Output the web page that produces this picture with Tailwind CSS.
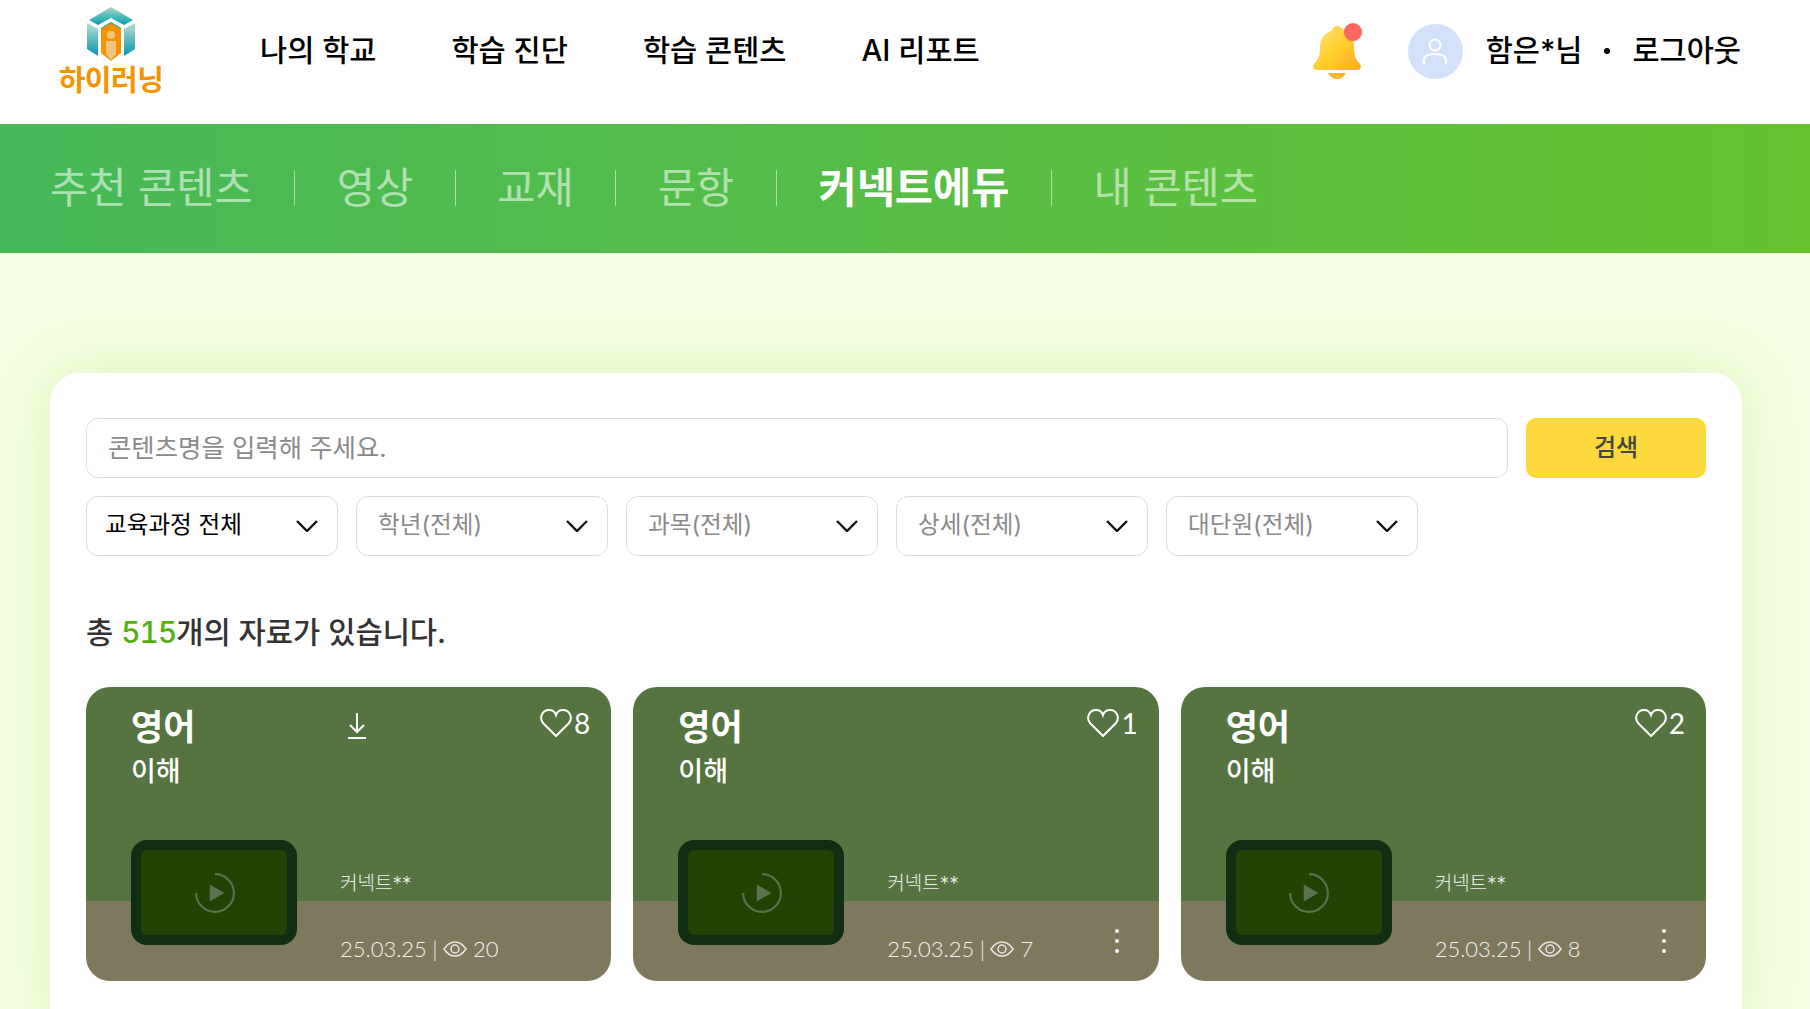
<!DOCTYPE html>
<html lang="ko">
<head>
<meta charset="utf-8">
<script src="https://cdn.jsdelivr.net/npm/@tailwindcss/browser@4"></script>
</head>
<body class="w-[1810px] h-[1009px] overflow-hidden bg-[#f5ffe1] font-['Inter','Noto_Sans_CJK_KR','Noto_Sans',sans-serif]">
<header class="h-[124px] bg-white flex items-center pl-[58px] pr-[69px] text-black">
  <div class="w-[106px] h-[124px] flex flex-col items-center pt-[7px]">
    <svg width="50" height="54" viewBox="0 0 50 54">
      <defs>
        <linearGradient id="top" x1="0" y1="0" x2="0" y2="1"><stop offset="0" stop-color="#a9d8c6"/><stop offset="1" stop-color="#00a0b5"/></linearGradient>
        <linearGradient id="side" x1="0" y1="0" x2="0" y2="1"><stop offset="0" stop-color="#b5e0d0"/><stop offset="1" stop-color="#0a93b0"/></linearGradient>
      </defs>
      <path d="M25 0L47 13L38 18L25 11L12 18L3 13Z" fill="url(#top)"/>
      <path d="M25 15L35 21V28H15V21Z" fill="#00a0b5"/>
      <path d="M1 17L12 23V50L1 43Z" fill="url(#side)" transform="translate(0 -1)"/>
      <path d="M49 17L38 23V50L49 43Z" fill="url(#side)" transform="translate(0 -1)"/>
      <path d="M15 22L25 16L35 22V46L25 54L15 46Z" fill="#f59300"/>
      <path d="M20 34H30V47L25 53L20 47Z" fill="#f2c47d"/>
      <circle cx="25" cy="28" r="4" fill="#f2c47d"/>
    </svg>
    <div class="text-[29px] leading-[32px] font-bold text-[#f59300] mt-[4px] tracking-[-0.5px] whitespace-nowrap">하이러닝</div>
  </div>
  <nav class="flex gap-[75px] ml-[96px] text-[29.5px] font-medium leading-none -mt-[23px]">
    <a>나의 학교</a><a>학습 진단</a><a>학습 콘텐츠</a><a>AI 리포트</a>
  </nav>
  <div class="ml-auto flex items-center -mt-[22px]">
    <div class="relative w-[50px] h-[56px] mr-[45px]">
      <svg width="50" height="56" viewBox="0 0 50 56">
        <defs><linearGradient id="bell" x1="0" y1="0" x2="1" y2="1"><stop offset="0" stop-color="#fde58a"/><stop offset=".5" stop-color="#ffd02a"/><stop offset="1" stop-color="#ffa92a"/></linearGradient></defs>
        <path d="M24 3C28 3 30 6 31 8C38 10 41 16 41 24C41 33 43 37 47 41C49 44 47 47 45 47H3C1 47 -1 44 1 41C5 37 7 33 7 24C7 14 13 10 18 8C19 5 21 3 24 3Z" fill="url(#bell)"/>
        <path d="M15 50H33C31 54 28 56 24 56C20 56 17 54 15 50Z" fill="#ffb62a"/>
      </svg>
      <span class="absolute left-[31px] top-0 w-[18px] h-[18px] rounded-full bg-[#ff6660] shadow"></span>
    </div>
    <div class="w-[55px] h-[55px] rounded-full bg-[#d3e1fb] flex items-center justify-center mr-[23px]">
      <svg width="26" height="28" viewBox="0 0 26 28" fill="none" stroke="#fff" stroke-width="2"><circle cx="13" cy="8" r="5.5"/><path d="M2 26V23C2 19 6 17 13 17S24 19 24 23V26" stroke-linecap="round"/></svg>
    </div>
    <span class="text-[29.5px] font-medium leading-none">함은*님</span>
    <span class="w-[6px] h-[6px] rounded-full bg-black mx-[22px]"></span>
    <a class="text-[29.5px] font-medium leading-none">로그아웃</a>
  </div>
</header>
<div class="h-[129px] bg-gradient-to-r from-[#46b858] to-[#66c22d] flex items-center pl-[50px] text-[41.5px] leading-none text-white/55">
  <a>추천 콘텐츠</a><i class="w-px h-[36px] -mt-[2px] bg-white/50 mx-[41.6px]"></i>
  <a>영상</a><i class="w-px h-[36px] -mt-[2px] bg-white/50 mx-[41.6px]"></i>
  <a>교재</a><i class="w-px h-[36px] -mt-[2px] bg-white/50 mx-[41.6px]"></i>
  <a>문항</a><i class="w-px h-[36px] -mt-[2px] bg-white/50 mx-[41.6px]"></i>
  <a class="text-white font-bold">커넥트에듀</a><i class="w-px h-[36px] -mt-[2px] bg-white/50 mx-[41.6px]"></i>
  <a>내 콘텐츠</a>
</div>
<main class="mt-[120px] mx-[50px] w-[1692px] bg-white rounded-t-[30px] px-[36px] pt-[45px] pb-[40px] shadow-[0_0_60px_rgba(120,190,60,0.2)]">
  <div class="flex gap-[18px]">
    <div class="flex-1 h-[60px] border border-[#dcdcdc] rounded-[12px] flex items-center pl-[21px] text-[25.4px] text-[#8a8a8a]">콘텐츠명을 입력해 주세요.</div>
    <button class="w-[180px] h-[60px] rounded-[10px] bg-[#fbd83c] text-[24px] text-[#444] font-medium">검색</button>
  </div>
  <div class="flex gap-[18px] mt-[18px]">
    <div class="w-[252px] h-[60px] border border-[#dcdcdc] rounded-[12px] flex items-center justify-between pl-[18px] pr-[19px] text-[23.6px] text-black"><span class="-mt-[2px]">교육과정 전체</span><svg width="22" height="12" viewBox="0 0 22 12" fill="none" stroke="#111" stroke-width="2.4"><path d="M1 1L11 11L21 1"/></svg></div>
    <div class="w-[252px] h-[60px] border border-[#dcdcdc] rounded-[12px] flex items-center justify-between pl-[21px] pr-[19px] text-[23.6px] text-[#8a8a8a]"><span class="-mt-[2px]">학년(전체)</span><svg width="22" height="12" viewBox="0 0 22 12" fill="none" stroke="#111" stroke-width="2.4"><path d="M1 1L11 11L21 1"/></svg></div>
    <div class="w-[252px] h-[60px] border border-[#dcdcdc] rounded-[12px] flex items-center justify-between pl-[21px] pr-[19px] text-[23.6px] text-[#8a8a8a]"><span class="-mt-[2px]">과목(전체)</span><svg width="22" height="12" viewBox="0 0 22 12" fill="none" stroke="#111" stroke-width="2.4"><path d="M1 1L11 11L21 1"/></svg></div>
    <div class="w-[252px] h-[60px] border border-[#dcdcdc] rounded-[12px] flex items-center justify-between pl-[21px] pr-[19px] text-[23.6px] text-[#8a8a8a]"><span class="-mt-[2px]">상세(전체)</span><svg width="22" height="12" viewBox="0 0 22 12" fill="none" stroke="#111" stroke-width="2.4"><path d="M1 1L11 11L21 1"/></svg></div>
    <div class="w-[252px] h-[60px] border border-[#dcdcdc] rounded-[12px] flex items-center justify-between pl-[21px] pr-[19px] text-[23.6px] text-[#8a8a8a]"><span class="-mt-[2px]">대단원(전체)</span><svg width="22" height="12" viewBox="0 0 22 12" fill="none" stroke="#111" stroke-width="2.4"><path d="M1 1L11 11L21 1"/></svg></div>
  </div>
  <p class="mt-[56px] text-[29.6px] leading-[40px] font-medium text-[#333]">총 <span class="text-[#52b10e] tabular-nums tracking-[-0.8px]">515</span>개의 자료가 있습니다.</p>
  <div class="grid grid-cols-3 gap-[22px] mt-[35px]">
    <article class="relative h-[294px] rounded-[24px] overflow-hidden bg-[linear-gradient(#56743f_214px,#7e795c_214px)] text-white pl-[45px] pt-[18px]">
      <h3 class="text-[35px] leading-[44px] font-bold">영어</h3>
      <p class="text-[27px] leading-[36px] mt-[5px] font-medium">이해</p>
      <svg class="absolute left-[261px] top-[25px]" width="20" height="28" viewBox="0 0 20 28" fill="none" stroke="#fff" stroke-width="2"><path d="M10 1V19M3 13L10 20L17 13M1 26H19"/></svg>
      <div class="absolute right-[21px] top-[21px] flex items-center text-[28px] leading-none font-['Lato',sans-serif]"><svg width="32" height="30" viewBox="0 0 32 30" fill="none" stroke="#fff" stroke-width="2"><path d="M16 28L3 15C-1 10 2 2 9 2C12 2 15 4 16 7C17 4 20 2 23 2C30 2 33 10 29 15Z"/></svg><span class="ml-[2px]">8</span></div>
      <div class="absolute left-[45px] top-[153px] w-[166px] h-[105px] rounded-[16px] bg-[#102e12] p-[10px]"><div class="w-full h-full rounded-[6px] bg-[#224304] flex items-center justify-center"><svg class="ml-[1px]" width="42" height="42" viewBox="0 0 40 40" fill="none" stroke="#5a7350" stroke-width="2"><path d="M2 20A18 18 0 1 0 20 2"/><path d="M15 12L29 20L15 28Z" fill="#5a7350" stroke="none"/></svg></div></div>
      <div class="absolute left-[254px] top-[183px] text-[19px] leading-[28px] text-white/90 font-light">커넥트**</div>
      <div class="absolute left-[254px] top-[247px] flex items-center text-[22px] leading-[30px] text-white/90 font-['Lato',sans-serif] font-light">25.03.25<span class="mx-[5.5px]">|</span><svg class="mr-[6px]" width="24" height="16" viewBox="0 0 24 16" fill="none" stroke="#e6e6e0" stroke-width="1.5"><path d="M1 8C5 2 9 1 12 1S19 2 23 8C19 14 15 15 12 15S5 14 1 8Z"/><circle cx="12" cy="8" r="4"/></svg>20</div>
    </article>
    <article class="relative h-[294px] rounded-[24px] overflow-hidden bg-[linear-gradient(#56743f_214px,#7e795c_214px)] text-white pl-[45px] pt-[18px]">
      <h3 class="text-[35px] leading-[44px] font-bold">영어</h3>
      <p class="text-[27px] leading-[36px] mt-[5px] font-medium">이해</p>
      <div class="absolute right-[21px] top-[21px] flex items-center text-[28px] leading-none font-['Lato',sans-serif]"><svg width="32" height="30" viewBox="0 0 32 30" fill="none" stroke="#fff" stroke-width="2"><path d="M16 28L3 15C-1 10 2 2 9 2C12 2 15 4 16 7C17 4 20 2 23 2C30 2 33 10 29 15Z"/></svg><span class="ml-[2px]">1</span></div>
      <div class="absolute left-[45px] top-[153px] w-[166px] h-[105px] rounded-[16px] bg-[#102e12] p-[10px]"><div class="w-full h-full rounded-[6px] bg-[#224304] flex items-center justify-center"><svg class="ml-[1px]" width="42" height="42" viewBox="0 0 40 40" fill="none" stroke="#5a7350" stroke-width="2"><path d="M2 20A18 18 0 1 0 20 2"/><path d="M15 12L29 20L15 28Z" fill="#5a7350" stroke="none"/></svg></div></div>
      <div class="absolute left-[254px] top-[183px] text-[19px] leading-[28px] text-white/90 font-light">커넥트**</div>
      <div class="absolute left-[254px] top-[247px] flex items-center text-[22px] leading-[30px] text-white/90 font-['Lato',sans-serif] font-light">25.03.25<span class="mx-[5.5px]">|</span><svg class="mr-[6px]" width="24" height="16" viewBox="0 0 24 16" fill="none" stroke="#e6e6e0" stroke-width="1.5"><path d="M1 8C5 2 9 1 12 1S19 2 23 8C19 14 15 15 12 15S5 14 1 8Z"/><circle cx="12" cy="8" r="4"/></svg>7</div>
      <div class="absolute right-[40px] top-[242px] flex flex-col gap-[6px]"><i class="w-[4px] h-[4px] rounded-full bg-white"></i><i class="w-[4px] h-[4px] rounded-full bg-white"></i><i class="w-[4px] h-[4px] rounded-full bg-white"></i></div>
    </article>
    <article class="relative h-[294px] rounded-[24px] overflow-hidden bg-[linear-gradient(#56743f_214px,#7e795c_214px)] text-white pl-[45px] pt-[18px]">
      <h3 class="text-[35px] leading-[44px] font-bold">영어</h3>
      <p class="text-[27px] leading-[36px] mt-[5px] font-medium">이해</p>
      <div class="absolute right-[21px] top-[21px] flex items-center text-[28px] leading-none font-['Lato',sans-serif]"><svg width="32" height="30" viewBox="0 0 32 30" fill="none" stroke="#fff" stroke-width="2"><path d="M16 28L3 15C-1 10 2 2 9 2C12 2 15 4 16 7C17 4 20 2 23 2C30 2 33 10 29 15Z"/></svg><span class="ml-[2px]">2</span></div>
      <div class="absolute left-[45px] top-[153px] w-[166px] h-[105px] rounded-[16px] bg-[#102e12] p-[10px]"><div class="w-full h-full rounded-[6px] bg-[#224304] flex items-center justify-center"><svg class="ml-[1px]" width="42" height="42" viewBox="0 0 40 40" fill="none" stroke="#5a7350" stroke-width="2"><path d="M2 20A18 18 0 1 0 20 2"/><path d="M15 12L29 20L15 28Z" fill="#5a7350" stroke="none"/></svg></div></div>
      <div class="absolute left-[254px] top-[183px] text-[19px] leading-[28px] text-white/90 font-light">커넥트**</div>
      <div class="absolute left-[254px] top-[247px] flex items-center text-[22px] leading-[30px] text-white/90 font-['Lato',sans-serif] font-light">25.03.25<span class="mx-[5.5px]">|</span><svg class="mr-[6px]" width="24" height="16" viewBox="0 0 24 16" fill="none" stroke="#e6e6e0" stroke-width="1.5"><path d="M1 8C5 2 9 1 12 1S19 2 23 8C19 14 15 15 12 15S5 14 1 8Z"/><circle cx="12" cy="8" r="4"/></svg>8</div>
      <div class="absolute right-[40px] top-[242px] flex flex-col gap-[6px]"><i class="w-[4px] h-[4px] rounded-full bg-white"></i><i class="w-[4px] h-[4px] rounded-full bg-white"></i><i class="w-[4px] h-[4px] rounded-full bg-white"></i></div>
    </article>
  </div>
</main>
</body>
</html>
